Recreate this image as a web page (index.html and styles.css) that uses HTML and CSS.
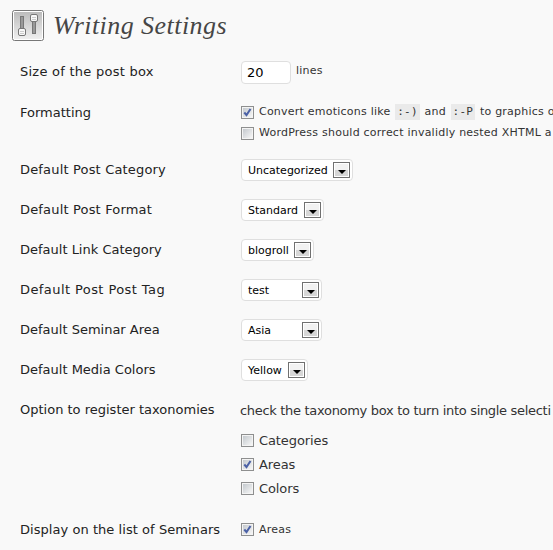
FILE: index.html
```html
<!DOCTYPE html>
<html lang="en">
<head>
<meta charset="utf-8">
<title>Writing Settings</title>
<link rel="stylesheet" href="styles.css">
</head>
<body>
<svg class="defs" width="0" height="0" aria-hidden="true">
  <defs>
    <linearGradient id="metal" x1="0" y1="0" x2="0" y2="1"><stop offset="0" stop-color="#bcbcbc"/><stop offset="1" stop-color="#efefef"/></linearGradient>
  </defs>
</svg>
<header class="page-head">
  <svg class="page-icon" width="32" height="32" viewBox="0 0 32 32">
    <rect x=".5" y=".5" width="31" height="30" rx="2" fill="#fff" stroke="#777"/>
    <rect x="2" y="2" width="28" height="27" fill="url(#metal)"/>
    <rect x="8.500" y="6.500" width="3" height="13" fill="#999" stroke="#777"/>
    <rect x="6.500" y="18.500" width="7" height="7" rx="1.500" fill="#f8f8f8" stroke="#777"/>
    <path d="M8 21.500h4M8 23.500h4" stroke="#ccc"/>
    <rect x="20.500" y="10.500" width="3" height="13" fill="#999" stroke="#777"/>
    <rect x="18.500" y="4.500" width="7" height="7" rx="1.500" fill="#f8f8f8" stroke="#777"/>
    <path d="M20 7.500h4M20 9.500h4" stroke="#ccc"/>
  </svg>
  <h1>Writing Settings</h1>
</header>
<main class="form">
  <div class="row"><div class="label track-md">Size of the post box</div><div class="field size"><input class="num" type="text" value="20"><span class="small">lines</span></div></div>
  <div class="row formatting"><div class="label">Formatting</div><div class="field checks">
    <label class="check small"><span class="box on"><svg width="9" height="9" viewBox="0 0 9 9"><path d="M1.300 4.500 3.500 7 7.500 1"/></svg></span><span>Convert emoticons like <code>:-)</code> and <code>:-P</code> to graphics o</span></label>
    <label class="check small"><span class="box"></span><span>WordPress should correct invalidly nested XHTML a</span></label>
  </div></div>
  <div class="row"><div class="label track-sm">Default Post Category</div><div class="field"><div class="select w112"><span>Uncategorized</span><i class="arrow"></i></div></div></div>
  <div class="row"><div class="label track-sm">Default Post Format</div><div class="field"><div class="select w83"><span>Standard</span><i class="arrow"></i></div></div></div>
  <div class="row"><div class="label">Default Link Category</div><div class="field"><div class="select w73"><span>blogroll</span><i class="arrow"></i></div></div></div>
  <div class="row"><div class="label track-lg">Default Post Post Tag</div><div class="field"><div class="select w81"><span>test</span><i class="arrow"></i></div></div></div>
  <div class="row"><div class="label">Default Seminar Area</div><div class="field"><div class="select w81"><span>Asia</span><i class="arrow"></i></div></div></div>
  <div class="row"><div class="label">Default Media Colors</div><div class="field"><div class="select w67"><span>Yellow</span><i class="arrow"></i></div></div></div>
  <div class="row taxonomies"><div class="label">Option to register taxonomies</div><div class="field options">
    <p>check the taxonomy box to turn into single selecti</p>
    <label class="check"><span class="box"></span><span>Categories</span></label>
    <label class="check"><span class="box on"><svg width="9" height="9" viewBox="0 0 9 9"><path d="M1.300 4.500 3.500 7 7.500 1"/></svg></span><span>Areas</span></label>
    <label class="check"><span class="box"></span><span>Colors</span></label>
  </div></div>
  <div class="row"><div class="label track-xs">Display on the list of Seminars</div><div class="field checks last">
    <label class="check small"><span class="box on"><svg width="9" height="9" viewBox="0 0 9 9"><path d="M1.300 4.500 3.500 7 7.500 1"/></svg></span><span>Areas</span></label>
  </div></div>
</main>
</body>
</html>
```
FILE: styles.css
```css
* { box-sizing: border-box; }
body {
  margin: 0;
  height: 550px;
  overflow: hidden;
  background: #f9f9f9;
  color: #333;
  font: 13px/20px Verdana, "DejaVu Sans", sans-serif;
}
.defs { display: block; }
.page-head { display: flex; height: 52px; padding: 10px 0 0 12px; }
.page-icon { flex: none; }
h1 {
  margin: 0 0 0 9px;
  color: #464646;
  font: italic 26px/31px "Liberation Serif", serif;
  letter-spacing: .45px;
  white-space: nowrap;
}
.row { display: grid; grid-template-columns: 220px 1fr; height: 40px; padding-left: 20px; white-space: nowrap; }
.formatting { height: 58px; }
.taxonomies { height: 120px; }
.label { padding-top: 10px; color: #222; }
.formatting .label { padding-top: 11px; }
.track-xs { letter-spacing: .05px; }
.track-sm { letter-spacing: .17px; }
.track-md { letter-spacing: .25px; }
.track-lg { letter-spacing: .42px; }
.small { font-size: 11px; letter-spacing: .23px; }
.field { min-width: 0; }
.size { display: flex; gap: 5px; padding: 9px 0 0 1px; }
.num {
  width: 50px;
  height: 23px;
  padding: 0 5px;
  border: 1px solid #dfdfdf;
  border-radius: 4px;
  background: #fff;
  color: #000;
  font: 13px "DejaVu Sans", sans-serif;
}
.checks { padding: 10px 0 0 1px; }
.check { display: flex; gap: 5px; height: 21px; }
.box {
  flex: none;
  display: grid;
  place-items: center;
  width: 13px;
  height: 13px;
  margin-top: 4px;
  border: 1px solid #8e8f8f;
  background: linear-gradient(135deg, #c4c9ce, #f6f6f6) content-box, #f4f4f4;
  padding: 1px;
}
.last .box { margin-top: 3px; }
.box svg { display: block; fill: none; stroke: #4b61a6; stroke-width: 2; }
code {
  margin: 0 1px;
  padding: 1px 2px 2px;
  background: #eaeaea;
  font: 11px "DejaVu Sans Mono", monospace;
}
.select {
  display: flex;
  justify-content: space-between;
  height: 22px;
  margin: 9px 0 0 1px;
  padding: 2px 2px 0 6px;
  border: 1px solid #dfdfdf;
  border-radius: 4px;
  background: #fff;
  color: #000;
  font-size: 11px;
  line-height: 17px;
}
.w112 { width: 112px; }
.w83 { width: 83px; }
.w73 { width: 73px; }
.w81 { width: 81px; }
.w67 { width: 67px; }
.arrow {
  display: grid;
  place-items: center;
  width: 17px;
  height: 16px;
  border: 1px solid #707070;
  background: linear-gradient(#f2f2f2 50%, #d6d6d6 50%) padding-box;
  box-shadow: inset 0 0 0 1px #fff;
}
.arrow::after {
  content: "";
  margin-top: 4px;
  border: solid transparent;
  border-width: 4px 4px 0;
  border-top-color: #000;
}
.options p { margin: 0; padding-top: 11px; letter-spacing: -.31px; }
.options .check { height: 24px; padding-left: 1px; letter-spacing: -.1px; }
.options p + .check { margin-top: 10px; }
.options .box { margin-top: 3px; }
```
